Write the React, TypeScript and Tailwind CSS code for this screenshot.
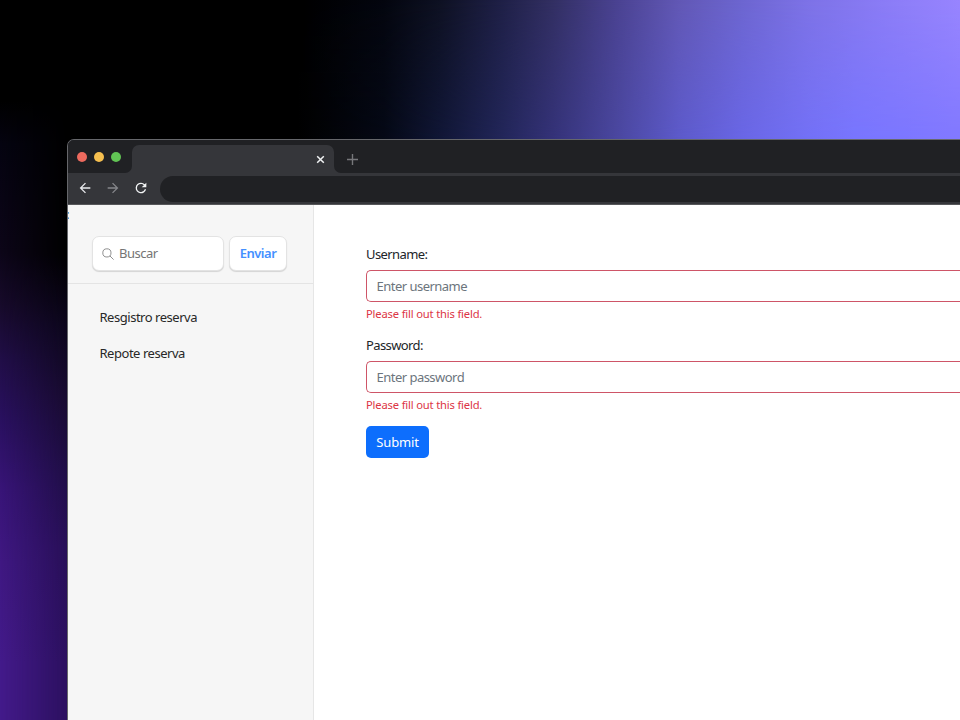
import React from "react";

function Backdrop() {
  return (
    <>
      <div className="absolute inset-x-0 top-0 h-[145px] bg-[linear-gradient(90deg,#000_31%,#04060f_40%,#0e1122_45.7%,#1f2047_52.3%,#322f62_57.5%,#4a4291_64.2%,#6258b5_70.7%,#6d66d0_77.3%,#7d72e6_83.9%,#8b7cf6_92%,#9885ff_100%)]" />
      <div className="absolute inset-x-0 top-0 h-[145px] bg-[linear-gradient(90deg,#000_31%,#050916_40%,#101636_45.7%,#22265a_52.3%,#343279_57.5%,#4a47a0_64.2%,#5c5acb_70.7%,#6966e6_77.3%,#7270f6_83.9%,#7775ff_89%,#8078ff_100%)] [mask-image:linear-gradient(to_bottom,transparent,black)]" />
      <div className="absolute top-0 left-0 h-full w-[80px] bg-[linear-gradient(180deg,#000_27%,#000_35%,#0c061c_45%,#180b30_55%,#200e48_66%,#280f58_76%,#2c1060_92%)]" />
      <div className="absolute top-0 left-0 h-full w-[80px] bg-[linear-gradient(180deg,#000_14%,#040310_20%,#0c0518_35%,#170a2b_42.5%,#210e48_50%,#29105f_58%,#381478_68%,#3f1882_78%,#431a8a_92%)] [mask-image:linear-gradient(to_right,black,transparent_67px)]" />
    </>
  );
}

function TabStrip() {
  return (
    <div className="flex h-[33px] bg-[#202124]">
      <div className="flex w-16 shrink-0 bg-[#35363a]">
        <div className="flex w-16 rounded-br-[7px] bg-[#202124] pt-[11.5px] pl-[9.3px]">
          <div className="flex h-[10px] gap-[7px]">
            <span className="size-[10px] rounded-full bg-[#ed6a5e]" />
            <span className="size-[10px] rounded-full bg-[#f5bf4f]" />
            <span className="size-[10px] rounded-full bg-[#61c454]" />
          </div>
        </div>
      </div>
      <div className="mt-[5px] flex w-[202px] shrink-0 items-center justify-end rounded-t-[7px] bg-[#35363a] pr-[9px]">
        <svg className="size-[9px]" viewBox="0 0 9 9" fill="none" stroke="#f1f3f4" strokeWidth="1.5">
          <path d="M1.2 1.2 7.8 7.8M7.8 1.2 1.2 7.8" />
        </svg>
      </div>
      <div className="flex grow bg-[#35363a]">
        <div className="flex grow rounded-bl-[7px] bg-[#202124] pt-[14px] pl-[13px]">
          <svg className="size-[11px]" viewBox="0 0 11 11" fill="none" stroke="#77787b" strokeWidth="1.4">
            <path d="M5.5 0v11M0 5.5h11" />
          </svg>
        </div>
      </div>
    </div>
  );
}

function Toolbar() {
  return (
    <div className="flex h-8 items-center border-b border-[#56575a] bg-[#35363a]">
      <div className="-mt-px flex w-[92px] shrink-0 items-center gap-3 pl-[9px]">
        <svg className="size-4" viewBox="0 0 24 24" fill="#e8eaed">
          <path d="M20 11H7.83l5.59-5.59L12 4l-8 8 8 8 1.41-1.41L7.83 13H20v-2z" />
        </svg>
        <svg className="size-4" viewBox="0 0 24 24" fill="#85868a">
          <path d="m12 4-1.41 1.41L16.17 11H4v2h12.17l-5.58 5.59L12 20l8-8z" />
        </svg>
        <svg className="size-4" viewBox="0 0 24 24" fill="#f1f3f4">
          <path d="M17.65 6.35A7.95 7.95 0 0 0 12 4a8 8 0 1 0 7.73 10h-2.08A6 6 0 1 1 12 6c1.66 0 3.14.69 4.22 1.78L13 11h7V4l-2.35 2.35z" />
        </svg>
      </div>
      <div className="h-[26px] grow rounded-l-full bg-[#202124]" />
    </div>
  );
}

function Sidebar() {
  return (
    <aside className="w-[246px] shrink-0 border-r border-[#e6e6e6] bg-[#f6f6f6]">
      <div className="relative flex h-[79px] gap-[5px] border-b border-[#e4e4e4] pt-[31px] pl-6">
        <span className="absolute top-[2px] -left-[2px] text-[13px] leading-[14px] text-[#222]">:</span>
        <div className="flex h-[35px] w-[132px] items-center rounded-[7px] border border-[#e3e3e3] bg-white pl-[9px] shadow-[0_1px_1px_rgba(0,0,0,0.14)]">
          <svg className="mr-[5px] size-3" viewBox="0 0 12 12" fill="none" stroke="#8f8f8f" strokeWidth="1">
            <circle cx="4.9" cy="4.9" r="4.1" />
            <path d="m7.9 7.9 3.7 3.7" />
          </svg>
          <span className="text-[13px] tracking-[-0.5px] text-[#757575]">Buscar</span>
        </div>
        <button className="h-[35px] w-[58px] rounded-[7px] border border-[#e3e3e3] bg-white text-[13px] font-semibold tracking-[-0.5px] text-[#4490ff] shadow-[0_1px_1px_rgba(0,0,0,0.14)]">
          Enviar
        </button>
      </div>
      <nav className="flex flex-col gap-4 pt-[23px] pl-[31.5px] text-[13px] leading-5 tracking-[-0.47px] text-[#282828]">
        <a>Resgistro reserva</a>
        <a>Repote reserva</a>
      </nav>
    </aside>
  );
}

function Field({ label, placeholder }: { label: string; placeholder: string }) {
  return (
    <div className="mb-3">
      <div className="mb-[6px] text-[13px] leading-5 tracking-[-0.6px] text-[#212529]">{label}</div>
      <div className="flex h-8 items-center rounded-l-[5px] border border-r-0 border-[#ce5567] pt-px pl-[9.5px] text-[13px] tracking-[-0.52px] text-[#6c757d]">
        {placeholder}
      </div>
      <div className="mt-[2px] h-[19px] text-[11.2px] leading-[19px] tracking-[-0.17px] text-[#dc3545]">
        Please fill out this field.
      </div>
    </div>
  );
}

export default function App() {
  return (
    <div className="relative h-[720px] w-[960px] overflow-hidden bg-black pt-[139px] pl-[67px] font-['Noto_Sans','Open_Sans',sans-serif]">
      <Backdrop />
      <div className="relative flex h-[600px] w-[893px] flex-col overflow-hidden rounded-tl-[7px] border-t border-l border-[#66676b] bg-[#35363a]">
        <TabStrip />
        <Toolbar />
        <div className="flex grow bg-white">
          <Sidebar />
          <main className="grow pt-[39px] pl-[52px]">
            <Field label="Username:" placeholder="Enter username" />
            <Field label="Password:" placeholder="Enter password" />
            <button className="flex h-8 w-[63px] items-center justify-center rounded-[5px] bg-[#0d6efd] pt-px text-[13px] tracking-[-0.15px] text-white">
              Submit
            </button>
          </main>
        </div>
      </div>
    </div>
  );
}
